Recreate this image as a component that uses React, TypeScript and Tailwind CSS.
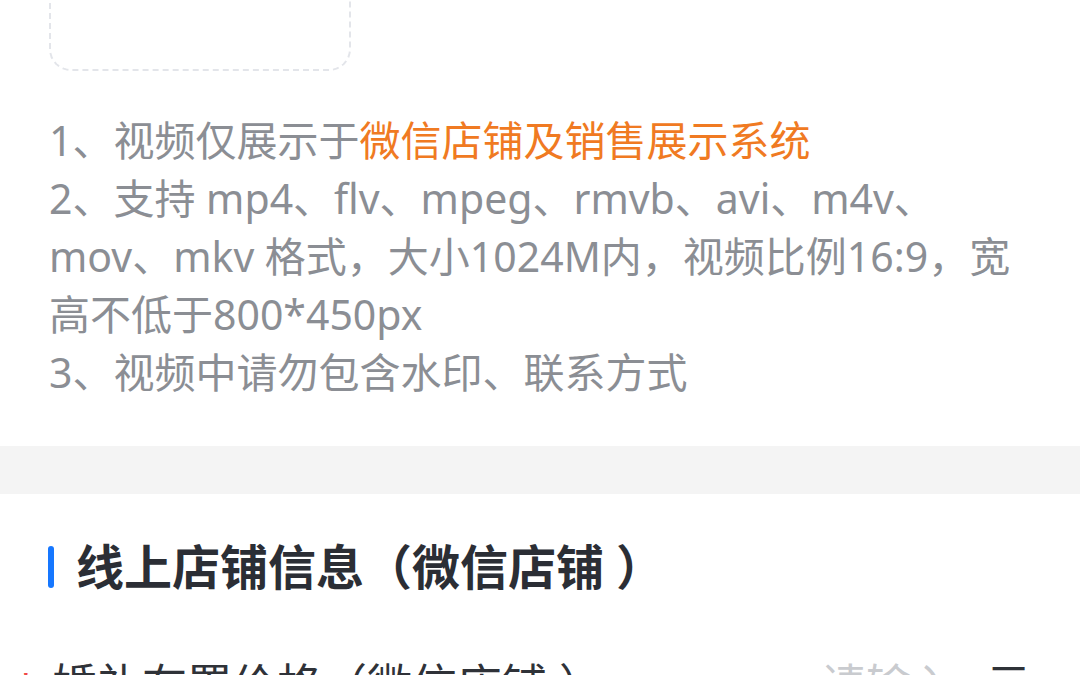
import React from "react";

const FONT = {
  fontFamily: '"Noto Sans", "Noto Sans CJK SC", sans-serif',
};

export default function App() {
  return (
    <div className="h-[675px] w-[1080px] overflow-hidden bg-white" style={FONT}>
      {/* upload area, scrolled partly out of view */}
      <div className="bg-white px-[49px] pb-[45px]">
        <div className="-mt-[231px] h-[302px] w-[302px] rounded-[22px] border-2 border-dashed border-[#e3e5ea]" />

        <div className="mt-[40px] text-[41px] leading-[58px] text-[#8b8e94]">
          <p>
            1、视频仅展示于<span className="text-[#f07a22]">微信店铺及销售展示系统</span>
          </p>
          <p>
            2、支持 mp4、flv、mpeg、rmvb、avi、m4v、mov、mkv 格式，大小1024M内，视频比例16:9，宽高不低于800*450px
          </p>
          <p>3、视频中请勿包含水印、联系方式</p>
        </div>
      </div>

      <div className="h-[48px] bg-[#f4f4f4]" />

      {/* online store section */}
      <div className="bg-white">
        <div className="flex items-center gap-[22px] pl-[48px] pt-[44px]">
          <span className="h-[42px] w-[6px] rounded-full bg-[#1677ff]" />
          <h2 className="text-[48px] font-bold leading-[58px] text-[#2b2e35]">
            线上店铺信息（微信店铺<span className="ml-[12px]">）</span>
          </h2>
        </div>

        <div className="relative mt-[60px] flex items-center pl-[52px] pr-[49px] text-[45px] leading-[58px]">
          <span className="absolute left-[16px] top-[2px] text-[36px] text-[#f04848]">*</span>
          <span className="text-[#2f3238]">
            婚礼布置价格（微信店铺<span className="ml-[12px]">）</span>
          </span>
          <span className="ml-auto text-[#c9cbcf]">请输入</span>
          <span className="ml-[30px] text-[#2f3238]">元</span>
        </div>
      </div>
    </div>
  );
}
